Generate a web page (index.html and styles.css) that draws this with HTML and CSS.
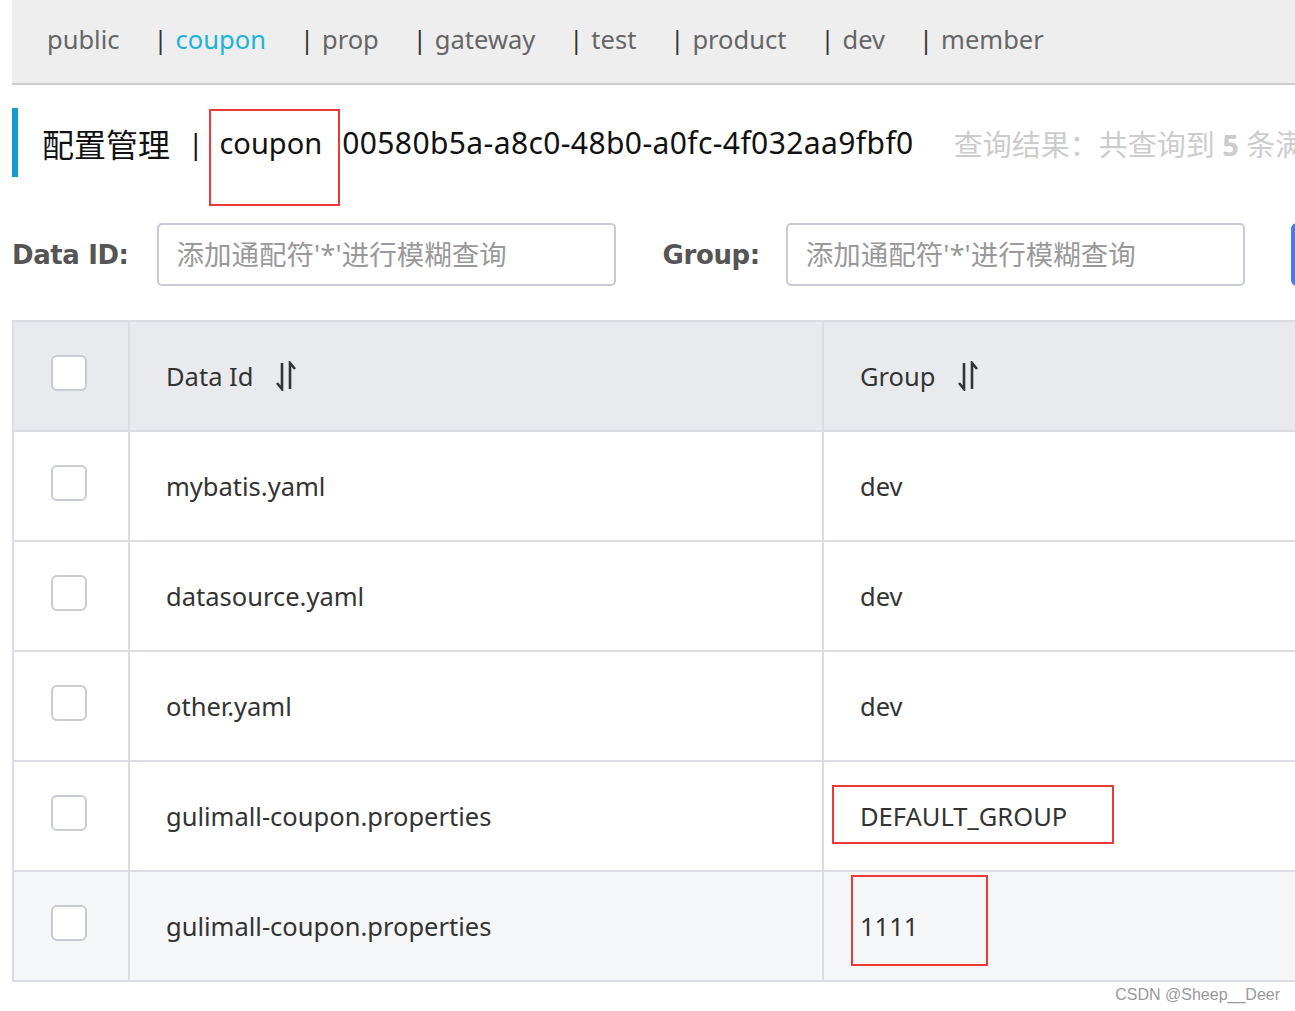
FILE: index.html
```html
<!DOCTYPE html>
<html>
  <head>
    <meta charset="utf-8">
    <link rel="stylesheet" href="styles.css">
  </head>
  <body>
    <div class="page">

      <div class="ns-bar">
        <span class="ns-item">public</span>
        <span class="ns-item"><span class="sep">|</span><span class="active">coupon</span></span>
        <span class="ns-item"><span class="sep">|</span>prop</span>
        <span class="ns-item"><span class="sep">|</span>gateway</span>
        <span class="ns-item"><span class="sep">|</span>test</span>
        <span class="ns-item"><span class="sep">|</span>product</span>
        <span class="ns-item"><span class="sep">|</span>dev</span>
        <span class="ns-item"><span class="sep">|</span>member</span>
      </div>

      <div class="title-row">
        <span class="title">配置管理</span>
        <span class="title-sep">|</span>
        <span class="mark mark-ns">coupon</span>
        <span class="ns-id">00580b5a-a8c0-48b0-a0fc-4f032aa9fbf0</span>
        <span class="result">查询结果：共查询到 <b>5</b> 条满足要求的配置。</span>
      </div>

      <div class="search-row">
        <label class="s-label">Data ID:</label>
        <input class="s-input" type="text" placeholder="添加通配符'*'进行模糊查询">
        <label class="s-label s-group">Group:</label>
        <input class="s-input" type="text" placeholder="添加通配符'*'进行模糊查询">
        <button class="s-btn">查询</button>
      </div>

      <table class="cfg-table">
        <colgroup>
          <col class="c-check">
          <col class="c-id">
          <col class="c-group">
        </colgroup>
        <tr class="head">
          <td><span class="checkbox"></span></td>
          <td>Data Id <svg class="sort" viewBox="0 0 24 30" width="24" height="30"><path d="M8 2V28L3 22M16 28V2L21 8" fill="none" stroke="#333" stroke-width="2.6"/></svg></td>
          <td>Group <svg class="sort" viewBox="0 0 24 30" width="24" height="30"><path d="M8 2V28L3 22M16 28V2L21 8" fill="none" stroke="#333" stroke-width="2.6"/></svg></td>
        </tr>
        <tr>
          <td><span class="checkbox"></span></td>
          <td>mybatis.yaml</td>
          <td>dev</td>
        </tr>
        <tr>
          <td><span class="checkbox"></span></td>
          <td>datasource.yaml</td>
          <td>dev</td>
        </tr>
        <tr>
          <td><span class="checkbox"></span></td>
          <td>other.yaml</td>
          <td>dev</td>
        </tr>
        <tr>
          <td><span class="checkbox"></span></td>
          <td>gulimall-coupon.properties</td>
          <td><span class="mark mark-default">DEFAULT_GROUP</span></td>
        </tr>
        <tr class="hover">
          <td><span class="checkbox"></span></td>
          <td>gulimall-coupon.properties</td>
          <td><span class="mark mark-1111">1111</span></td>
        </tr>
      </table>

      <div class="watermark">CSDN @Sheep__Deer</div>
    </div>
  </body>
</html>
```

FILE: styles.css
```css
body {
  margin: 0;
  padding: 0;
  font-family: "Noto Sans", "Noto Sans CJK SC", sans-serif;
  color: #333;
  background-color: white;
}
.page {
  width: 1295px;
  height: 1011px;
  overflow: hidden;
  padding-left: 12px;
  box-sizing: border-box;
}

/* namespace tabs */
.ns-bar {
  width: 1400px;
  height: 85px;
  background-color: #eeeeee;
  border-bottom: 2px solid #cccccc;
  display: flex;
  align-items: center;
  padding-left: 35px;
  padding-bottom: 5px;
  box-sizing: border-box;
  font-size: 25.5px;
  color: #666;
}
.ns-item {
  margin-right: 34px;
  white-space: nowrap;
}
.ns-item .sep {
  color: #333;
  margin-right: 8px;
}
.ns-item .active {
  color: #1bb4d8;
}

/* title */
.title-row {
  margin-top: 23px;
  height: 69px;
  border-left: 6px solid #129bd0;
  display: flex;
  align-items: center;
  padding-left: 24px;
  white-space: nowrap;
  color: #111;
}
.title {
  font-size: 32px;
}
.title-sep {
  font-size: 28px;
  margin: 0 16px 0 18px;
}
.mark-ns {
  font-size: 29px;
}
.ns-id {
  font-size: 30px;
  letter-spacing: 0.4px;
  margin-left: 20px;
}
.result {
  font-size: 29px;
  color: #cccccc;
  margin-left: 40px;
}

/* red annotation boxes */
.mark {
  position: relative;
}
.mark::after {
  content: "";
  position: absolute;
  border: 2px solid #ec3a3a;
}
.mark-ns::after {
  left: -10px;
  right: -18px;
  top: -14px;
  bottom: -44px;
}
.mark-default::after {
  left: -28px;
  right: -47px;
  top: -14px;
  bottom: -11px;
}
.mark-1111::after {
  left: -9px;
  right: -70px;
  top: -34px;
  bottom: -23px;
}

/* search */
.search-row {
  margin-top: 46px;
  display: flex;
  align-items: center;
  white-space: nowrap;
}
.s-label {
  font-size: 26px;
  font-weight: bold;
  color: #555;
  margin-right: 28px;
  font-family: "DejaVu Sans", sans-serif;
  letter-spacing: -0.4px;
}
.s-group {
  margin-left: 47px;
  margin-right: 26px;
}
.s-input {
  width: 459px;
  height: 63px;
  box-sizing: border-box;
  border: 2px solid #c8cbd3;
  border-radius: 5px;
  padding: 0 18px;
  font: inherit;
  font-size: 27.5px;
  color: #333;
  flex-shrink: 0;
}
.s-input::placeholder {
  color: #999;
}
.s-btn {
  margin-left: 46px;
  width: 120px;
  height: 63px;
  flex-shrink: 0;
  border: none;
  border-radius: 6px;
  background-color: #3d7ef6;
  color: white;
  font: inherit;
  font-size: 26px;
}

/* table */
.cfg-table {
  margin-top: 34px;
  border-collapse: collapse;
  width: 1500px;
  table-layout: fixed;
  font-size: 25.5px;
  color: #333;
}
.c-check {
  width: 116px;
}
.c-id {
  width: 694px;
}
.cfg-table td {
  border: 2px solid #dcdde2;
  height: 108px;
  padding: 0 0 0 36px;
  white-space: nowrap;
}
.cfg-table td:first-child {
  padding-left: 37px;
}
.cfg-table .head td {
  background-color: #e9eaee;
}
.cfg-table .hover td {
  background-color: #f5f6f8;
}
.checkbox {
  display: block;
  width: 36px;
  height: 36px;
  box-sizing: border-box;
  border: 2px solid #c9cbd2;
  border-radius: 6px;
  background-color: white;
  margin-top: -6px;
}
.sort {
  vertical-align: middle;
  margin-left: 14px;
  margin-top: -6px;
}

.watermark {
  text-align: right;
  padding-right: 15px;
  margin-top: 4px;
  font-family: "Liberation Sans", sans-serif;
  font-size: 16px;
  color: #999;
}
```
